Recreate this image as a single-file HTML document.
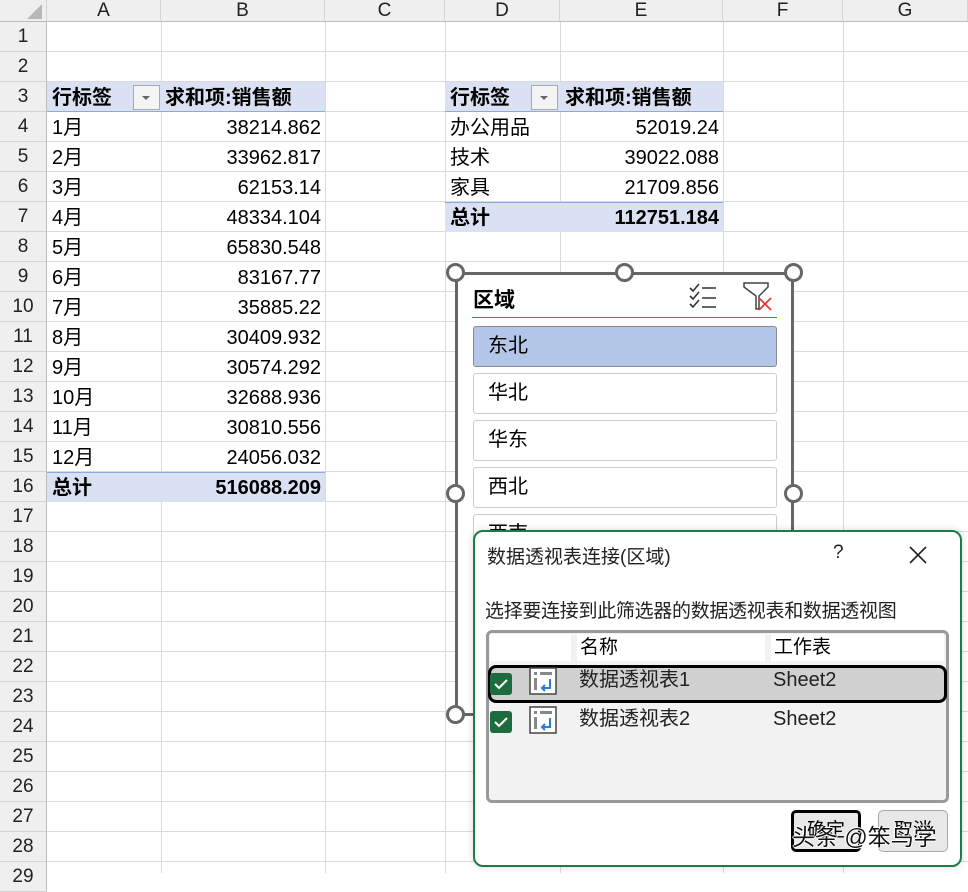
<!DOCTYPE html>
<html><head><meta charset="utf-8"><style>
*{margin:0;padding:0;box-sizing:border-box}
body{width:968px;height:873px;position:relative;overflow:hidden;background:#fff;font-family:"Liberation Sans","Noto Sans CJK SC",sans-serif;color:#000}
.a{position:absolute}
.c{position:absolute;height:30px;line-height:30px;font-size:20px;white-space:nowrap}
.r{text-align:right}
.rh{position:absolute;left:0;width:47px;height:30px;line-height:30px;font-size:19px;text-align:center;color:#222;background:#efefef;border-bottom:1px solid #d4d4d4;border-right:1px solid #bbb}
.ch{position:absolute;top:0;height:22px;line-height:22px;font-size:19px;text-align:center;color:#222;background:#efefef;border-right:1px solid #d4d4d4;border-bottom:1px solid #bbb}
.vl{position:absolute;top:22px;width:1px;height:851px;background:#dadada}
.b{font-weight:bold}
.hd{background:#d9e1f2}
.hnd{position:absolute;width:19px;height:19px;border:3px solid #666;border-radius:50%;background:#fff}
.it{position:absolute;left:473px;width:304px;height:41px;border:1px solid #ccc;border-radius:3px;font-size:20px;line-height:39px;padding-left:14px;background:#fff}
.t{position:absolute;font-size:20px;color:#222;line-height:28px;height:28px}
</style></head><body>
<div class="a" style="left:0;top:22px;width:968px;height:851px;background:repeating-linear-gradient(to bottom,transparent 0 29px,#dadada 29px 30px)"></div>
<div class="vl" style="left:161px"></div><div class="vl" style="left:325px"></div><div class="vl" style="left:445px"></div><div class="vl" style="left:560px"></div><div class="vl" style="left:723px"></div><div class="vl" style="left:843px"></div>
<div class="ch" style="left:0;width:47px"><svg width="47" height="22"><polygon points="42,4 42,19 27,19" fill="#b8b8b8"/></svg></div>
<div class="ch" style="left:47px;width:114px">A</div><div class="ch" style="left:161px;width:164px">B</div><div class="ch" style="left:325px;width:120px">C</div><div class="ch" style="left:445px;width:115px">D</div><div class="ch" style="left:560px;width:163px">E</div><div class="ch" style="left:723px;width:120px">F</div><div class="ch" style="left:843px;width:125px">G</div>
<div class="rh" style="top:22px">1</div><div class="rh" style="top:52px">2</div><div class="rh" style="top:82px">3</div><div class="rh" style="top:112px">4</div><div class="rh" style="top:142px">5</div><div class="rh" style="top:172px">6</div><div class="rh" style="top:202px">7</div><div class="rh" style="top:232px">8</div><div class="rh" style="top:262px">9</div><div class="rh" style="top:292px">10</div><div class="rh" style="top:322px">11</div><div class="rh" style="top:352px">12</div><div class="rh" style="top:382px">13</div><div class="rh" style="top:412px">14</div><div class="rh" style="top:442px">15</div><div class="rh" style="top:472px">16</div><div class="rh" style="top:502px">17</div><div class="rh" style="top:532px">18</div><div class="rh" style="top:562px">19</div><div class="rh" style="top:592px">20</div><div class="rh" style="top:622px">21</div><div class="rh" style="top:652px">22</div><div class="rh" style="top:682px">23</div><div class="rh" style="top:712px">24</div><div class="rh" style="top:742px">25</div><div class="rh" style="top:772px">26</div><div class="rh" style="top:802px">27</div><div class="rh" style="top:832px">28</div><div class="rh" style="top:862px">29</div>

<div class="a hd" style="left:47px;top:82px;width:278px;height:30px;border-bottom:1px solid #8ea9db"></div>
<div class="c b" style="left:52px;top:83px">行标签</div>
<div class="a" style="left:133px;top:85px;width:27px;height:25px;border:1px solid #aaa;background:#f4f4f4"><svg width="25" height="23"><polygon points="8,10 16,10 12,14" fill="#666"/></svg></div>
<div class="c b" style="left:165px;top:83px">求和项:销售额</div>
<div class="c" style="left:52px;top:113px">1月</div><div class="c r" style="left:161px;top:113px;width:160px">38214.862</div>
<div class="c" style="left:52px;top:143px">2月</div><div class="c r" style="left:161px;top:143px;width:160px">33962.817</div>
<div class="c" style="left:52px;top:173px">3月</div><div class="c r" style="left:161px;top:173px;width:160px">62153.14</div>
<div class="c" style="left:52px;top:203px">4月</div><div class="c r" style="left:161px;top:203px;width:160px">48334.104</div>
<div class="c" style="left:52px;top:233px">5月</div><div class="c r" style="left:161px;top:233px;width:160px">65830.548</div>
<div class="c" style="left:52px;top:263px">6月</div><div class="c r" style="left:161px;top:263px;width:160px">83167.77</div>
<div class="c" style="left:52px;top:293px">7月</div><div class="c r" style="left:161px;top:293px;width:160px">35885.22</div>
<div class="c" style="left:52px;top:323px">8月</div><div class="c r" style="left:161px;top:323px;width:160px">30409.932</div>
<div class="c" style="left:52px;top:353px">9月</div><div class="c r" style="left:161px;top:353px;width:160px">30574.292</div>
<div class="c" style="left:52px;top:383px">10月</div><div class="c r" style="left:161px;top:383px;width:160px">32688.936</div>
<div class="c" style="left:52px;top:413px">11月</div><div class="c r" style="left:161px;top:413px;width:160px">30810.556</div>
<div class="c" style="left:52px;top:443px">12月</div><div class="c r" style="left:161px;top:443px;width:160px">24056.032</div>
<div class="a hd" style="left:47px;top:472px;width:278px;height:30px;border-top:1px solid #8ea9db"></div>
<div class="c b" style="left:52px;top:473px">总计</div><div class="c b r" style="left:161px;top:473px;width:160px">516088.209</div>

<div class="a hd" style="left:445px;top:82px;width:278px;height:30px;border-bottom:1px solid #8ea9db"></div>
<div class="c b" style="left:450px;top:83px">行标签</div>
<div class="a" style="left:531px;top:85px;width:27px;height:25px;border:1px solid #aaa;background:#f4f4f4"><svg width="25" height="23"><polygon points="8,10 16,10 12,14" fill="#666"/></svg></div>
<div class="c b" style="left:565px;top:83px">求和项:销售额</div>
<div class="c" style="left:450px;top:113px">办公用品</div><div class="c r" style="left:560px;top:113px;width:159px">52019.24</div>
<div class="c" style="left:450px;top:143px">技术</div><div class="c r" style="left:560px;top:143px;width:159px">39022.088</div>
<div class="c" style="left:450px;top:173px">家具</div><div class="c r" style="left:560px;top:173px;width:159px">21709.856</div>
<div class="a hd" style="left:445px;top:202px;width:278px;height:30px;border-top:1px solid #8ea9db"></div>
<div class="c b" style="left:450px;top:203px">总计</div><div class="c b r" style="left:560px;top:203px;width:159px">112751.184</div>

<div class="a" style="left:455px;top:272px;width:339px;height:444px;border:3px solid #666;background:#fff"></div>
<div class="a b" style="left:473px;top:284px;font-size:21px">区域</div>
<svg class="a" style="left:688px;top:282px" width="32" height="28" stroke="#333" stroke-width="1.6" fill="none"><path d="M2 6l3 3 6-7M2 14l3 3 6-7M2 22l3 3 6-7M14 6h14M14 16h14M14 25h14"/></svg>
<svg class="a" style="left:742px;top:281px" width="32" height="30" fill="none"><path d="M2 2h24v4l-9 9v13h-3V15L2 6z" stroke="#444" stroke-width="1.5"/><path d="M17 17l12 12M29 17L17 29" stroke="#e33" stroke-width="1.8"/></svg>
<div class="a" style="left:472px;top:317px;width:305px;height:1px;background:#4472c4"></div>
<div class="it" style="top:326px;background:#b4c6e7;border-color:#8a8a8a">东北</div>
<div class="it" style="top:373px">华北</div>
<div class="it" style="top:420px">华东</div>
<div class="it" style="top:467px">西北</div>
<div class="it" style="top:514px;height:30px">西南</div>
<div class="hnd" style="left:446px;top:263px"></div><div class="hnd" style="left:615px;top:263px"></div><div class="hnd" style="left:784px;top:263px"></div>
<div class="hnd" style="left:446px;top:484px"></div><div class="hnd" style="left:784px;top:484px"></div>
<div class="hnd" style="left:446px;top:705px"></div>

<div class="a" style="left:473px;top:530px;width:489px;height:337px;border:2px solid #1e7a46;border-radius:10px;background:#fff;box-shadow:0 0 8px rgba(0,0,0,.15)"></div>
<div class="a" style="left:487px;top:542px;font-size:19px;color:#222">数据透视表连接(区域)</div>
<div class="a" style="left:833px;top:542px;font-size:19px;color:#222">?</div>
<svg class="a" style="left:908px;top:545px" width="20" height="20" stroke="#222" stroke-width="1.6"><path d="M2 2l16 16M18 2L2 18"/></svg>
<div class="a" style="left:485px;top:596px;font-size:19px;color:#222;letter-spacing:-0.3px">选择要连接到此筛选器的数据透视表和数据透视图</div>
<div class="a" style="left:486px;top:630px;width:463px;height:173px;border:3px solid #999;border-radius:6px;background:#f2f2f2"></div>
<div class="a" style="left:490px;top:634px;width:81px;height:27px;background:#fff"></div>
<div class="a" style="left:577px;top:634px;width:188px;height:27px;background:#fff;font-size:19px;padding-left:3px;line-height:27px">名称</div>
<div class="a" style="left:771px;top:634px;width:173px;height:27px;background:#fff;font-size:19px;padding-left:3px;line-height:27px">工作表</div>
<div class="a" style="left:488px;top:665px;width:459px;height:38px;border:3px solid #000;border-radius:8px;background:#d0d0d0"></div>
<div class="a" style="left:490px;top:673px;width:22px;height:22px;background:#1e6b3e;border-radius:3px"><svg width="22" height="22"><path d="M5 11l4 4 8-8" stroke="#fff" stroke-width="2" fill="none"/></svg></div>
<div class="a" style="left:490px;top:711px;width:22px;height:22px;background:#1e6b3e;border-radius:3px"><svg width="22" height="22"><path d="M5 11l4 4 8-8" stroke="#fff" stroke-width="2" fill="none"/></svg></div>
<svg class="a" style="left:529px;top:667px" width="28" height="28"><rect x="1" y="1" width="26" height="26" fill="#fff" stroke="#444" stroke-width="1.5"/><path d="M5 5h3v3H5zM11 5h12v3H11zM5 11h3v12H5z" fill="#888"/><path d="M21 12v9h-7M16 18l-3 3 3 3" stroke="#2b7cd3" stroke-width="2" fill="none"/></svg>
<svg class="a" style="left:529px;top:706px" width="28" height="28"><rect x="1" y="1" width="26" height="26" fill="#fff" stroke="#444" stroke-width="1.5"/><path d="M5 5h3v3H5zM11 5h12v3H11zM5 11h3v12H5z" fill="#888"/><path d="M21 12v9h-7M16 18l-3 3 3 3" stroke="#2b7cd3" stroke-width="2" fill="none"/></svg>
<div class="t" style="left:579px;top:666px">数据透视表1</div><div class="t" style="left:773px;top:666px">Sheet2</div>
<div class="t" style="left:579px;top:705px">数据透视表2</div><div class="t" style="left:773px;top:705px">Sheet2</div>
<div class="a" style="left:791px;top:810px;width:70px;height:42px;border:3px solid #000;border-radius:5px;background:#e8e8e8;font-size:19px;text-align:center;line-height:36px">确定</div>
<div class="a" style="left:878px;top:810px;width:70px;height:42px;border:1px solid #aaa;border-radius:5px;background:#e8e8e8;font-size:19px;text-align:center;line-height:40px">取消</div>
<div class="a" style="left:792px;top:818px;font-size:23px;color:#111;text-shadow:-1px 0 #fff,1px 0 #fff,0 -1px #fff,0 1px #fff">头条 @笨鸟学</div>
</body></html>
